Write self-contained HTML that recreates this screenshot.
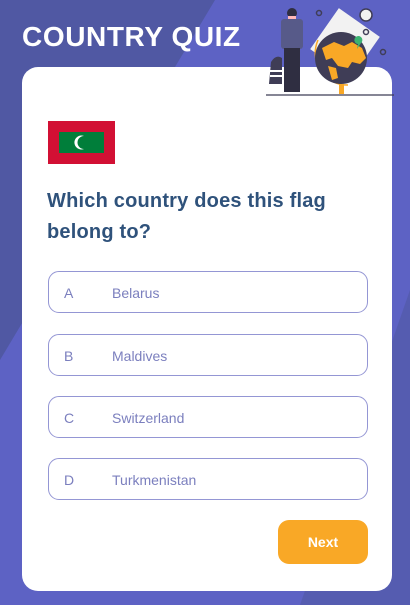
<!DOCTYPE html>
<html><head><style>
*{margin:0;padding:0;box-sizing:border-box}
body{width:410px;height:605px;overflow:hidden;position:relative;background:#5d62c4;font-family:"Liberation Sans",sans-serif}
.bg1{position:absolute;left:0;top:0;width:410px;height:605px}
h1{position:absolute;left:22px;top:21px;color:#fff;font-size:28px;font-weight:bold;letter-spacing:0.6px}
.card{position:absolute;left:22px;top:67px;width:370px;height:524px;background:#fff;border-radius:16px}
.flag{position:absolute;left:48px;top:121px;width:67px;height:43px;background:#d21034}
.flag .g{position:absolute;left:11px;top:11px;width:45px;height:21px;background:#007e3a}
.q{position:absolute;left:47px;top:186px;font-size:20px;font-weight:bold;color:#2f527b;line-height:31px;width:320px;letter-spacing:0.2px}
.opt{position:absolute;left:48px;width:320px;height:42px;border:1px solid #9496d4;border-radius:11px;color:#7b7fbe;font-size:14px}
.opt span{position:absolute;top:13px}
.next{position:absolute;left:278px;top:520px;width:90px;height:44px;background:#f9a826;border-radius:11px;color:#fff;font-weight:bold;font-size:14px;text-align:center;line-height:44px}
</style></head><body>
<svg class="bg1" viewBox="0 0 410 605"><polygon points="0,0 215,0 0,360" fill="#5058a3"/><polygon points="410,290 410,605 300,605" fill="#5058a3" opacity="0.6"/></svg>
<h1>COUNTRY QUIZ</h1>
<div class="card"></div>
<svg style="position:absolute;left:262px;top:0" width="148" height="100" viewBox="0 0 148 100">
<rect x="58" y="18" width="50" height="50" transform="rotate(35 83 43)" fill="#f2f2f2"/>
<circle cx="104" cy="15" r="6" fill="#f2f2f2" stroke="#3f3d56" stroke-width="1.5"/>
<circle cx="57" cy="13" r="2.5" fill="none" stroke="#3f3d56" stroke-width="1.5"/>
<circle cx="104" cy="32" r="2.5" fill="none" stroke="#3f3d56" stroke-width="1.5"/>
<circle cx="121" cy="52" r="2.5" fill="none" stroke="#3f3d56" stroke-width="1.5"/>
<path d="M56 40 A32 32 0 0 0 86 85" fill="none" stroke="#f9a826" stroke-width="1.5"/>
<circle cx="79" cy="58" r="26" fill="#3f3d56"/>
<path d="M60 48 l12-6 10 4 8-4 10 6 4 10-6 6-8-2-4 6-10-2-6-8-6 2z M66 66 l8 2 2 10-6 2z" fill="#f9a826"/>
<rect x="77" y="84" width="5" height="10" fill="#f9a826"/>
<path d="M96 44 a4 4 0 1 1 3 -1 l-4 6z" fill="#3cb371"/>
<circle cx="30" cy="13" r="5" fill="#2f2e41"/><rect x="26" y="16" width="8" height="5" fill="#ffb8b8"/>
<rect x="19" y="19" width="22" height="30" rx="3" fill="#575a89"/>
<rect x="22" y="48" width="16" height="44" fill="#2f2e41"/>
<path d="M9 62 q5-8 11-4 v26 h-13z" fill="#3f3d56"/><rect x="8" y="70" width="12" height="2" fill="#fff"/><rect x="8" y="75" width="12" height="2" fill="#fff"/>
<line x1="4" y1="95" x2="132" y2="95" stroke="#3f3d56" stroke-width="1.2"/>
</svg>
<div class="flag"><div class="g"></div><svg style="position:absolute;left:26px;top:13px" width="14" height="17"><path d="M10 2 A7 7 0 1 0 10 15 A5.5 5.5 0 1 1 10 2z" fill="#fff"/></svg></div>
<div class="q">Which country does this flag belong to?</div>
<div class="opt" style="top:271px"><span style="left:15px">A</span><span style="left:63px">Belarus</span></div>
<div class="opt" style="top:334px"><span style="left:15px">B</span><span style="left:63px">Maldives</span></div>
<div class="opt" style="top:396px"><span style="left:15px">C</span><span style="left:63px">Switzerland</span></div>
<div class="opt" style="top:458px"><span style="left:15px">D</span><span style="left:63px">Turkmenistan</span></div>
<div class="next">Next</div>
</body></html>
